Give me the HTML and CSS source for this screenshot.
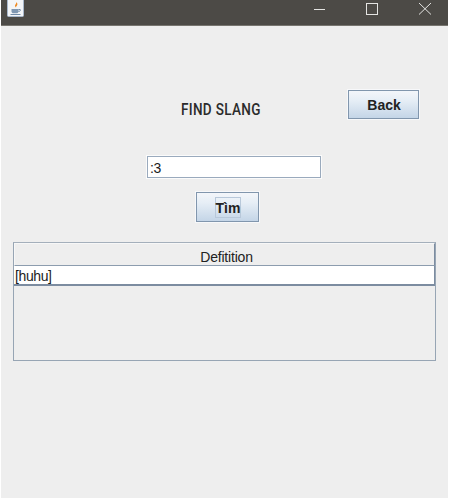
FILE: index.html
```html
<!DOCTYPE html>
<html lang="en">
<head>
<meta charset="utf-8">
<title>Find Slang</title>
<link rel="stylesheet" href="styles.css">
</head>
<body>
<div class="window">
  <header class="titlebar">
    <span class="app-icon">
      <svg width="17" height="17" viewBox="0 0 17 17">
        <rect x="0.5" y="-1" width="16" height="17.500" rx="1" fill="#f3f5f8" stroke="#a9b8cc"/>
        <path d="M9 2c1 1.600-1.600 2.600-.8 4.600.2.500.5.800.8 1-.2-1.600 2-2.400 1.300-4.200C10.100 2.900 9.600 2.400 9 2z" fill="#ee8a24"/>
        <path d="M4.500 9h7v2.500c0 1.200-1 1.800-2 1.800h-3c-1 0-2-.6-2-1.800z" fill="#7f97b2"/>
        <path d="M11.500 9.500H13c.8 0 .8 1.800-1.500 2M3.500 14.500h10" fill="none" stroke="#6f89a6"/>
      </svg>
    </span>
    <div class="window-controls">
      <svg class="control" width="53" height="26" viewBox="0 0 53 26"><path d="M25 9.500h11" stroke="#e4e4e2" fill="none"/></svg>
      <svg class="control" width="53" height="26" viewBox="0 0 53 26"><rect x="24.500" y="3.500" width="11" height="11" stroke="#e4e4e2" fill="none"/></svg>
      <svg class="control" width="53" height="26" viewBox="0 0 53 26"><path d="M24 3l12 11.500M36 3L24 14.500" stroke="#e4e4e2" fill="none"/></svg>
    </div>
  </header>
  <main class="content">
    <div class="top-row">
      <h1 class="page-title">FIND SLANG</h1>
      <button class="btn btn-back" type="button">Back</button>
    </div>
    <div class="search-row"><input class="search-input" type="text" value=":3"></div>
    <div class="action-row">
      <button class="btn btn-find" type="button"><span class="focus-box">Tìm</span></button>
    </div>
    <section class="table">
      <div class="table-head">Defitition</div>
      <div class="table-row">[huhu]</div>
      <div class="table-empty"></div>
    </section>
  </main>
</div>
</body>
</html>
```
FILE: styles.css
```css
* { box-sizing: border-box; }
html, body { margin: 0; padding: 0; background: #fff; }
body { width: 449px; height: 499px; overflow: hidden; font-family: "Liberation Sans", Arial, sans-serif; }
.window { width: 447px; height: 498px; margin-left: 1px; background: #eeeeee; display: flex; flex-direction: column; }
.titlebar { height: 26px; flex: none; background: #4c4a46; border-bottom: 1px solid #77756f; display: flex; justify-content: space-between; align-items: flex-start; }
.app-icon { display: block; margin-left: 6px; height: 17px; }
.app-icon svg, .control { display: block; }
.window-controls { display: flex; }
.content { flex: 1; display: flex; flex-direction: column; padding: 64px 12px 0; }
.top-row { display: flex; height: 29px; align-items: flex-start; }
.page-title { margin: 11px 0 0 168px; width: 167px; font: 500 16.5px/17px Roboto, sans-serif; color: #2b2b2b; letter-spacing: 0.4px; white-space: nowrap; transform: scaleX(0.82); transform-origin: left center; }
.btn { display: block; padding: 0; border: 1px solid #8196ad; outline: 1px solid #f7f8fa; background: linear-gradient(#f3f6fa 0%, #e6eef6 35%, #c4d5e7 100%); font-family: "Liberation Sans", Arial, sans-serif; font-weight: 700; font-size: 14px; color: #222; }
.btn-back { width: 71px; height: 29px; padding-left: 1px; }
.search-row { margin: 37px 0 0 134px; }
.search-input { display: block; width: 174px; height: 22px; border: 1px solid #9aaabd; outline: 1px solid #fbfbfb; background: #fff; padding: 2px 1px 0 2px; font: 14px "Liberation Sans", Arial, sans-serif; letter-spacing: -0.5px; color: #1c1c1c; border-radius: 0; }
.action-row { margin: 14px 0 0 183px; }
.btn-find { width: 63px; height: 30px; display: flex; align-items: center; justify-content: center; }
.focus-box { display: block; width: 26px; height: 21px; border: 1px solid #b8c8da; line-height: 20px; text-align: center; }
.table { margin-top: 20px; width: 423px; height: 119px; border: 1px solid #97a5b4; border-top-color: #a4afbb; display: flex; flex-direction: column; }
.table-head { height: 23px; flex: none; border: 1px solid #f7f7f7; border-bottom: 1px solid #8c9cae; border-right: 1px solid #7c8ca0; padding-left: 4px; text-align: center; font-size: 14px; letter-spacing: -0.2px; line-height: 26px; color: #222; }
.table-row { height: 20px; flex: none; background: #fff; border-bottom: 2px solid #7c8ca0; border-right: 1px solid #7c8ca0; font-size: 14px; letter-spacing: -0.4px; line-height: 21px; padding-left: 1px; color: #1c1c1c; }
.table-empty { flex: 1; }
```
